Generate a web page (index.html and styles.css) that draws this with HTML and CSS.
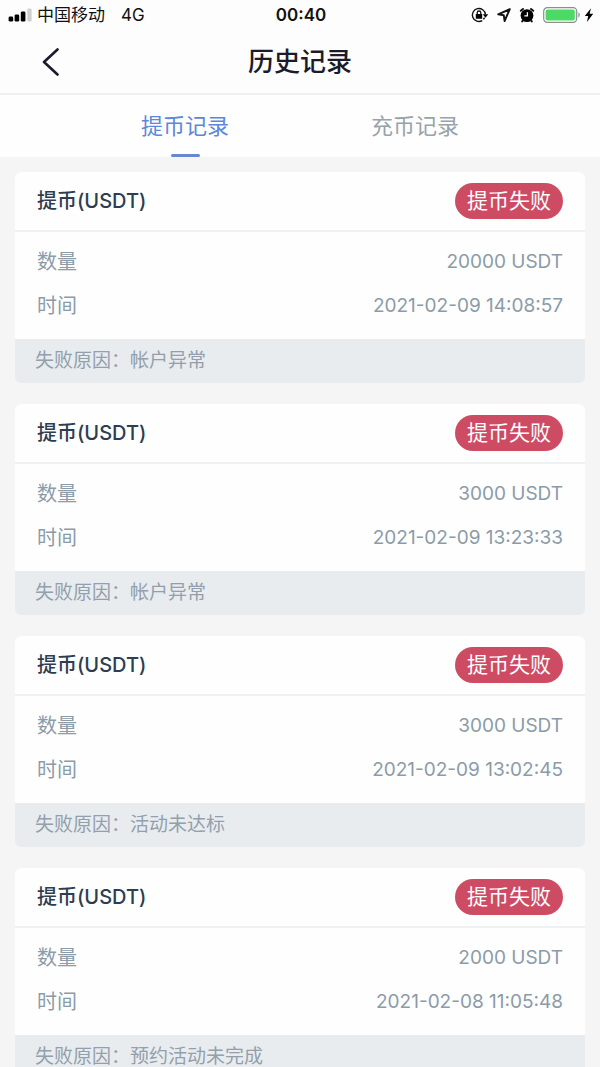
FILE: index.html
```html
<!DOCTYPE html>
<html lang="zh-CN">
<head>
    <meta charset="UTF-8">
    <meta name="viewport" content="width=device-width, initial-scale=1.0">
    <title>历史记录</title>
    <link rel="stylesheet" href="styles.css">
</head>
<body>

    <div class="status-bar">
        <div class="status-left">
            <svg class="signal" width="24" height="14" viewBox="0 0 24 14">
                <rect x="0.6" y="8.6" width="4.6" height="5" rx="1.4"/>
                <rect x="6.6" y="6.4" width="4.6" height="7.2" rx="1.4"/>
                <rect x="12.8" y="3.4" width="4.6" height="10.2" rx="1.4"/>
                <rect x="19.4" y="0.6" width="4.2" height="13" rx="1.4" fill="#cfcfcf"/>
            </svg>
            <span>中国移动</span>
            <span class="network">4G</span>
        </div>
        <time class="clock">00:40</time>
        <div class="status-right">
            <!-- rotation lock -->
            <svg width="18" height="16" viewBox="0 0 18 16">
                <path d="M11.2 13.6A6.5 6.5 0 1 1 14.4 7.4" fill="none" stroke="#111" stroke-width="1.4"/>
                <path d="M13.6 10.6l-1.2 1.8" stroke="#111" stroke-width="1.4"/>
                <path d="M11.8 7.2h5.4l-2.7 3.6z"/>
                <rect x="4.8" y="7" width="6.4" height="4.8" rx="0.6"/>
                <path d="M6.2 7.4V5.8a1.8 1.8 0 0 1 3.6 0v1.6" fill="none" stroke="#111" stroke-width="1.3"/>
            </svg>
            <!-- location -->
            <svg width="14" height="14" viewBox="0 0 14 14">
                <path d="M12.8 1.2L1.2 6.4l5.6.9.8 5.7z" fill="none" stroke="#111" stroke-width="1.9" stroke-linejoin="round"/>
            </svg>
            <!-- alarm -->
            <svg width="16" height="16" viewBox="0 0 16 16">
                <circle cx="8" cy="8.6" r="6.4"/>
                <path d="M1.8 3.8l2.2-1.8M14.2 3.8l-2.2-1.8M4 13.4l-.8 1M12 13.4l.8 1" stroke="#111" stroke-width="2" stroke-linecap="round"/>
                <path d="M8.4 5.2v3.6H5.4" fill="none" stroke="#fff" stroke-width="1.3"/>
            </svg>
            <!-- battery -->
            <svg width="38" height="16" viewBox="0 0 38 16">
                <rect x="0.7" y="0.7" width="33" height="14.6" rx="3.6" fill="#fff" stroke="#8e8e8e" stroke-width="1.2"/>
                <rect x="2.6" y="2.6" width="29.2" height="10.8" rx="2" fill="#4cd964"/>
                <path d="M35.4 5.6c1.8.6 1.8 4.2 0 4.8z" fill="#8e8e8e"/>
            </svg>
            <svg width="10" height="16" viewBox="0 0 10 16">
                <path d="M7 1.2L.8 9h3.4L3 15l6.2-8.2H5.6z"/>
            </svg>
        </div>
    </div>

    <header class="nav-bar">
        <button class="back" type="button" aria-label="返回">
            <svg width="18" height="28" viewBox="0 0 18 28">
                <path d="M15.5 1.5L2 14l13.5 12.5" fill="none" stroke="#1c1b2b" stroke-width="2.6" stroke-linecap="round" stroke-linejoin="round"/>
            </svg>
        </button>
        <h1>历史记录</h1>
    </header>

    <nav class="tabs">
        <a class="tab active" href="#withdraw">提币记录</a>
        <a class="tab" href="#deposit">充币记录</a>
    </nav>

    <main class="records" id="withdraw">
        <section class="card">
            <div class="card-header">
                <h2>提币(USDT)</h2>
                <span class="badge">提币失败</span>
            </div>
            <dl class="card-body">
                <div class="row"><dt>数量</dt><dd>20000 USDT</dd></div>
                <div class="row"><dt>时间</dt><dd>2021-02-09 14:08:57</dd></div>
            </dl>
            <p class="reason">失败原因：帐户异常</p>
        </section>

        <section class="card">
            <div class="card-header">
                <h2>提币(USDT)</h2>
                <span class="badge">提币失败</span>
            </div>
            <dl class="card-body">
                <div class="row"><dt>数量</dt><dd>3000 USDT</dd></div>
                <div class="row"><dt>时间</dt><dd>2021-02-09 13:23:33</dd></div>
            </dl>
            <p class="reason">失败原因：帐户异常</p>
        </section>

        <section class="card">
            <div class="card-header">
                <h2>提币(USDT)</h2>
                <span class="badge">提币失败</span>
            </div>
            <dl class="card-body">
                <div class="row"><dt>数量</dt><dd>3000 USDT</dd></div>
                <div class="row"><dt>时间</dt><dd>2021-02-09 13:02:45</dd></div>
            </dl>
            <p class="reason">失败原因：活动未达标</p>
        </section>

        <section class="card">
            <div class="card-header">
                <h2>提币(USDT)</h2>
                <span class="badge">提币失败</span>
            </div>
            <dl class="card-body">
                <div class="row"><dt>数量</dt><dd>2000 USDT</dd></div>
                <div class="row"><dt>时间</dt><dd>2021-02-08 11:05:48</dd></div>
            </dl>
            <p class="reason">失败原因：预约活动未完成</p>
        </section>
    </main>

</body>
</html>
```
FILE: styles.css
```css
* {
    box-sizing: border-box;
    margin: 0;
    padding: 0;
}

body {
    display: flex;
    flex-direction: column;
    height: 100vh;
    font-family: Inter, "Noto Sans CJK SC", sans-serif;
    background-color: #f5f5f6;
    color: #2d3e50;
}

/* phone status bar */
.status-bar {
    display: grid;
    grid-template-columns: 1fr auto 1fr;
    align-items: center;
    height: 30px;
    flex: none;
    padding: 0 6px 0 8px;
    background-color: #fdfdfd;
    color: #111;
    font-size: 17px;
    line-height: 30px;
}

.status-left,
.status-right {
    display: flex;
    align-items: center;
}

.status-left {
    gap: 5px;
}

.network {
    margin-left: 11px;
}

.clock {
    font-weight: 600;
}

.status-right {
    justify-content: flex-end;
    gap: 8px;
}

.status-right svg:last-child {
    margin-left: -5px;
}

/* title bar */
.nav-bar {
    display: grid;
    grid-template-columns: 1fr auto 1fr;
    align-items: center;
    height: 65px;
    flex: none;
    background-color: #fdfdfd;
    border-bottom: 2px solid #efefef;
}

.back {
    justify-self: start;
    display: flex;
    margin-left: 32px;
    padding: 8px 10px;
    border: none;
    background: none;
    cursor: pointer;
}

.nav-bar h1 {
    font-size: 26px;
    font-weight: 500;
    line-height: 40px;
    color: #1c1b2b;
}

.tabs {
    display: flex;
    flex: none;
    height: 62px;
    padding: 0 70px;
    background-color: #fefefe;
}

.tab {
    flex: 1;
    display: flex;
    flex-direction: column;
    align-items: center;
    justify-content: space-between;
    font-size: 22px;
    line-height: 32px;
    padding-top: 15px;
    color: #98a3ab;
    text-decoration: none;
}

.tab.active {
    color: #5b87dc;
}

.tab.active::after {
    content: "";
    width: 29px;
    height: 3px;
    border-radius: 2px;
    background-color: #6886d2;
}

/* record cards */
.records {
    flex: 1;
    min-height: 0;
    display: flex;
    flex-direction: column;
    gap: 21px;
    padding: 15px;
    overflow-y: auto;
    scrollbar-width: none;
}

.card {
    flex: none;
    border-radius: 6px;
    background-color: #fefefe;
    overflow: hidden;
}

.card-header {
    display: flex;
    align-items: center;
    justify-content: space-between;
    height: 60px;
    padding: 0 22px;
    border-bottom: 2px solid #eff1f2;
}

.card-header h2 {
    font-size: 20px;
    font-weight: 500;
    line-height: 30px;
}

.badge {
    padding: 0 12px;
    border-radius: 18px;
    background-color: #ce4c63;
    color: #fff;
    font-size: 21px;
    line-height: 36px;
}

.card-body {
    display: flex;
    flex-direction: column;
    gap: 14px;
    padding: 15px 22px 18px;
}

.row {
    display: flex;
    justify-content: space-between;
    font-size: 20px;
    line-height: 30px;
    color: #8b9ba9;
}

.row dd {
    font-size: 19px;
}

.reason {
    padding: 0 20px;
    background-color: #e8ecef;
    color: #93a0ac;
    font-size: 19px;
    line-height: 44px;
}
```
